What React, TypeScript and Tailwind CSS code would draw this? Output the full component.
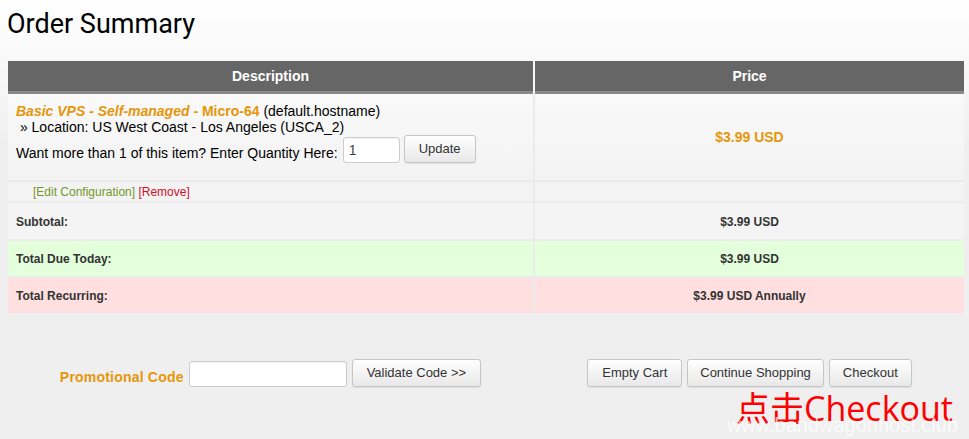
import React from "react";

const btnBase =
  "h-[28px] rounded-[3px] border border-[#c6c6c6] bg-[linear-gradient(to_bottom,#ffffff,#e8e8e8)] shadow-[0_1px_1px_rgba(0,0,0,0.08)] text-[13px] text-[#333] leading-[26px]";
const btn = `${btnBase} px-[14px]`;
const input =
  "h-[26px] rounded-[3px] border border-[#cccccc] bg-white shadow-[inset_0_1px_1px_rgba(0,0,0,0.05)] px-[5px] text-[14px] text-[#444] outline-none";

export default function App() {
  return (
    <div
      className="relative w-[969px] h-[439px] overflow-hidden bg-[linear-gradient(to_bottom,#ffffff_0px,#efefef_150px)] text-black"
      style={{ fontFamily: '"Liberation Sans", Arial, sans-serif' }}
    >
      <div className="pl-[7px] pt-[11px]">
        <h1
          className="text-[27px] leading-[27px] font-normal text-black"
          style={{ fontFamily: 'Roboto, "Open Sans", sans-serif' }}
        >
          Order Summary
        </h1>
      </div>

      <div className="ml-[8px] mt-[23px] w-[956px]">
        {/* header */}
        <div className="grid grid-cols-[525px_429px] gap-x-[2px]">
          <div className="h-[33px] bg-[#666666] border-b-[3px] border-[#8a8a8a] flex items-center justify-center text-white font-bold text-[14px]">
            Description
          </div>
          <div className="h-[33px] bg-[#666666] border-b-[3px] border-[#8a8a8a] flex items-center justify-center text-white font-bold text-[14px]">
            Price
          </div>
        </div>

        {/* body */}
        <div className="grid grid-cols-[525px_429px] gap-[2px] bg-[#ebebeb]">
          <div className="h-[86px] bg-[linear-gradient(to_bottom,#f9f9f9,#f3f3f3)] pl-[8px] pt-[9px] text-[14px] leading-[16px]">
            <div>
              <span className="font-bold italic text-[#e6960a]">
                Basic VPS - Self-managed
              </span>
              <span className="font-bold text-[#e6960a]"> - Micro-64</span>
              <span> (default.hostname)</span>
            </div>
            <div>{"\u00a0» Location: US West Coast - Los Angeles (USCA_2)"}</div>
            <div className="flex items-end">
              <span className="pb-[2px]">
                Want more than 1 of this item? Enter Quantity Here:
              </span>
              <input
                className={`${input} ml-[5px] w-[57px]`}
                defaultValue="1"
              />
              <button className={`${btnBase} px-[14px] ml-[4px] h-[27px] leading-[25px]`}>
                Update
              </button>
            </div>
          </div>
          <div className="h-[86px] bg-[linear-gradient(to_bottom,#f9f9f9,#f3f3f3)] flex items-center justify-center font-bold text-[14px] text-[#e6960a]">
            $3.99 USD
          </div>

          <div className="h-[19px] bg-[#f3f3f3] pl-[25px] pt-[2px] text-[12px] leading-[17px]">
            <span className="text-[#73982a]">[Edit Configuration]</span>{" "}
            <span className="text-[#d0102a]">[Remove]</span>
          </div>
          <div className="h-[19px] bg-[#f3f3f3]" />

          <div className="h-[36px] bg-[#f4f4f4] pl-[8px] pt-[1px] flex items-center font-bold text-[12px] text-[#333]">
            Subtotal:
          </div>
          <div className="h-[36px] bg-[#f4f4f4] pt-[1px] flex items-center justify-center font-bold text-[12px] text-[#333]">
            $3.99 USD
          </div>

          <div className="h-[35px] bg-[#e4ffdc] pl-[8px] flex items-center font-bold text-[12px] text-[#333]">
            Total Due Today:
          </div>
          <div className="h-[35px] bg-[#e4ffdc] flex items-center justify-center font-bold text-[12px] text-[#333]">
            $3.99 USD
          </div>

          <div className="h-[35px] bg-[#ffdfdf] pl-[8px] flex items-center font-bold text-[12px] text-[#333]">
            Total Recurring:
          </div>
          <div className="h-[35px] bg-[#ffdfdf] flex items-center justify-center font-bold text-[12px] text-[#333]">
            $3.99 USD Annually
          </div>
        </div>

        {/* bottom actions */}
        <div className="grid grid-cols-[525px_429px] gap-x-[2px] mt-[46px]">
          <div className="flex items-end justify-center">
            <span className="font-bold text-[14px] leading-[16px] text-[#e6960a] pb-[2px] tracking-[0.2px]">
              Promotional Code
            </span>
            <input className={`${input} ml-[5px] w-[158px]`} />
            <button className={`${btn} ml-[5px]`}>Validate Code &gt;&gt;</button>
          </div>
          <div className="flex items-end justify-center gap-[5px]">
            <button className={btn}>Empty Cart</button>
            <button className={`${btnBase} px-[12px]`}>Continue Shopping</button>
            <button className={`${btnBase} px-[13px]`}>Checkout</button>
          </div>
        </div>
      </div>

      {/* annotation overlay */}
      <div
        className="absolute left-[736px] top-[391px] text-[34px] leading-[34px] text-[#ff0000] whitespace-nowrap"
        style={{ fontFamily: '"Open Sans", "Noto Sans CJK SC", sans-serif' }}
      >
        点击Checkout
      </div>
      <div className="absolute right-[11px] top-[414px] text-[20px] leading-[22px] text-white/70 whitespace-nowrap">
        www.bandwagonhost.club
      </div>
    </div>
  );
}
